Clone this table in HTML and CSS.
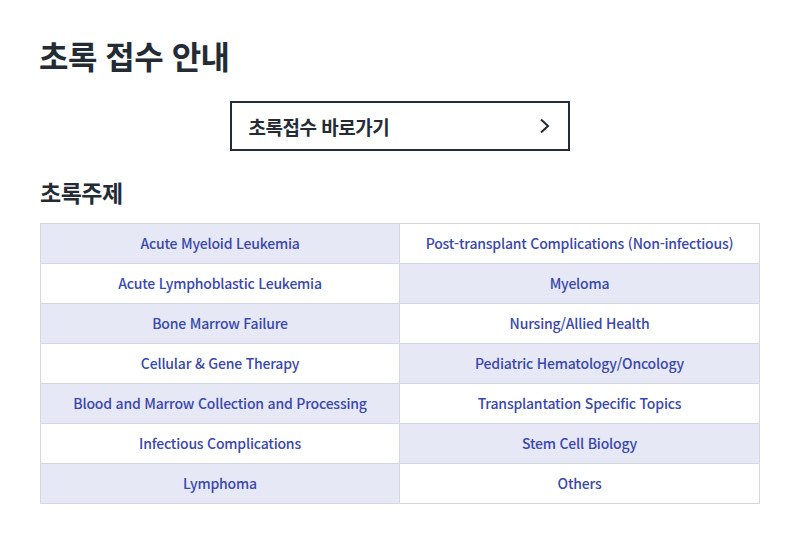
FILE: index.html
```html
<!DOCTYPE html>
<html lang="ko">
<head>
<meta charset="utf-8">
<link rel="stylesheet" href="styles.css">
</head>
<body>
<main class="page">
  <h1 class="title">초록 접수 안내</h1>
  <div class="btn-wrap">
    <a class="go-btn" href="#">
      <span>초록접수 바로가기</span>
      <svg class="chev" width="12" height="16" viewBox="0 0 12 16"><path d="M2 1.5 L9 8 L2 14.5" fill="none" stroke="#222a33" stroke-width="2"/></svg>
    </a>
  </div>
  <h2 class="sub">초록주제</h2>
  <div class="topics">
    <div class="cell alt">Acute Myeloid Leukemia</div>
    <div class="cell">Post-transplant Complications (Non-infectious)</div>
    <div class="cell">Acute Lymphoblastic Leukemia</div>
    <div class="cell alt">Myeloma</div>
    <div class="cell alt">Bone Marrow Failure</div>
    <div class="cell">Nursing/Allied Health</div>
    <div class="cell">Cellular &amp; Gene Therapy</div>
    <div class="cell alt">Pediatric Hematology/Oncology</div>
    <div class="cell alt">Blood and Marrow Collection and Processing</div>
    <div class="cell">Transplantation Specific Topics</div>
    <div class="cell">Infectious Complications</div>
    <div class="cell alt">Stem Cell Biology</div>
    <div class="cell alt">Lymphoma</div>
    <div class="cell">Others</div>
  </div>
</main>
</body>
</html>
```
FILE: styles.css
```css
html, body { margin: 0; padding: 0; background: #fff; }
body { font-family: "Noto Sans CJK KR", "Noto Sans", sans-serif; color: #232b35; }
.page { padding: 33px 40px 0 40px; }
.title { margin: 0 0 0 -1px; font-size: 32px; font-weight: 700; line-height: 44px; letter-spacing: -0.5px; }
.btn-wrap { display: flex; justify-content: center; margin-top: 24px; }
.go-btn {
  box-sizing: border-box; width: 340px; height: 50px;
  border: 2px solid #232b35; display: flex; align-items: center; justify-content: space-between;
  padding: 0 17px 0 17px; text-decoration: none; color: #232b35;
  font-size: 19px; font-weight: 700; margin-right: 1px;
}
.go-btn span { letter-spacing: -0.5px; }
.chev { display: block; }
.sub { margin: 26px 0 0 0; font-size: 23px; font-weight: 700; line-height: 30px; letter-spacing: -0.5px; }
.topics {
  margin-top: 16px; display: grid; grid-template-columns: 359px 360px;
  border-top: 1px solid #d3d7df; border-left: 1px solid #d3d7df;
}
.cell {
  box-sizing: border-box; height: 40px; padding-bottom: 2px;
  border-right: 1px solid #d3d7df; border-bottom: 1px solid #d3d7df;
  display: flex; align-items: center; justify-content: center;
  font-size: 14px; font-weight: 500; color: #3a47ad; letter-spacing: -0.2px;
  background: #fff;
}
.cell.alt { background: #e6e9f5; }
```
